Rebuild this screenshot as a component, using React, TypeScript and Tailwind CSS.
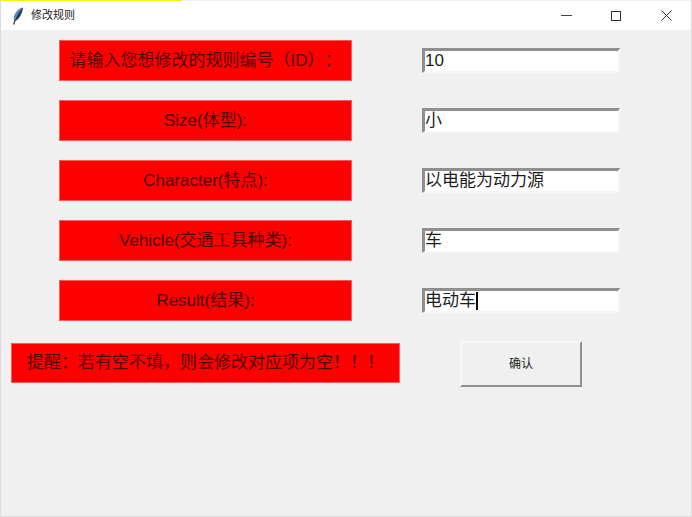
import React from "react";

const font = { cjk: "font-['Liberation_Sans','Noto_Sans_CJK_SC',sans-serif]" };

const rows = [
  { label: "请输入您想修改的规则编号（ID）：", value: "10" },
  { label: "Size(体型):", value: "小" },
  { label: "Character(特点):", value: "以电能为动力源" },
  { label: "Vehicle(交通工具种类):", value: "车" },
  { label: "Result(结果):", value: "电动车", caret: true },
];

const Feather = () => (
  <svg width="12" height="18" viewBox="0 0 12 18" className="shrink-0">
    <path d="M11 0.5 C7 1 3 5 1.8 10 C1.4 12 1.8 13.5 3 14 C7 12.5 10 6.5 11 0.5 Z" fill="#5b86bb" />
    <path d="M11 0.5 C7.5 4 4.5 9 3 14 C7 12.5 10 6.5 11 0.5 Z" fill="#26395a" />
    <path d="M3.2 13 L1.6 17.5" stroke="#222" strokeWidth="1.1" fill="none" />
  </svg>
);

const Row = ({ label, value, caret }: { label: string; value: string; caret?: boolean }) => (
  <div className="flex h-[41px] items-center">
    <div className="ml-[58px] flex h-[41px] w-[293px] items-center justify-center border border-[#ff5a5a] bg-[#ff0000] text-[17px] text-[#4a0000] [text-spacing-trim:space-all]">
      <span className="whitespace-nowrap">{label}</span>
    </div>
    <div className="ml-[70px] flex h-[25px] w-[198px] items-center border-2 border-t-[3px] border-l-[3px] border-t-[#8f8f8f] border-l-[#8f8f8f] border-r-[#f7f7f7] border-b-[#f7f7f7] bg-white pb-[1px] text-[17px] leading-none text-[#1c1c1c]">
      <span className="whitespace-nowrap">{value}</span>
      {caret && <span className="h-[18px] w-[2px] bg-black" />}
    </div>
  </div>
);

export default function App() {
  return (
    <div className={`relative h-[517px] w-[692px] overflow-hidden border-x border-b border-x-[#dcdcdc] border-b-[#dcdcdc] bg-[#f0f0f0] ${font.cjk}`}>
      <div className="h-px w-[181px] bg-[#f5f10f]" />
      <header className="flex h-[29px] items-center bg-white">
        <div className="ml-[11px] flex items-center gap-[7px]">
          <Feather />
          <span className="text-[11px] text-[#222]">修改规则</span>
        </div>
        <div className="ml-auto flex h-full items-center text-[#333]">
          <div className="flex h-full w-[50px] items-center justify-center">
            <div className="h-px w-[11px] bg-[#444]" />
          </div>
          <div className="flex h-full w-[50px] items-center justify-center">
            <div className="h-[10px] w-[10px] border border-[#333]" />
          </div>
          <div className="flex h-full w-[50px] items-center justify-center">
            <svg width="11" height="11" viewBox="0 0 11 11">
              <path d="M0.5 0.5 L10.5 10.5 M10.5 0.5 L0.5 10.5" stroke="#333" strokeWidth="1" fill="none" />
            </svg>
          </div>
        </div>
      </header>
      <main className="flex flex-col gap-[19px] pt-[10px]">
        {rows.map((r) => (
          <Row key={r.label} {...r} />
        ))}
      </main>
      <div className="mt-[20px] flex items-start">
        <div className="ml-[10px] mt-[2px] flex h-[40px] w-[389px] items-center justify-center border border-[#ff5a5a] bg-[#ff0000] text-[17px] text-[#4a0000]">
          <span className="whitespace-nowrap">提醒：若有空不填，则会修改对应项为空！！！</span>
        </div>
        <button className="ml-[60px] flex h-[46px] w-[122px] items-center justify-center border-2 border-t-[#f7f7f7] border-l-[#f7f7f7] border-r-[#8f8f8f] border-b-[#8f8f8f] bg-[#f0f0f0] text-[12px] text-[#222]">
          确认
        </button>
      </div>
      <div className="absolute left-[-1px] top-[217px] h-[41px] w-px bg-[#ff0000]" />
    </div>
  );
}
